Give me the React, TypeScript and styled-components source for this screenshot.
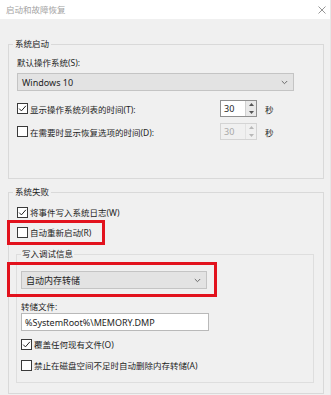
import React from 'react';
import styled, { createGlobalStyle } from 'styled-components';

const Global = createGlobalStyle`
  html, body { margin: 0; padding: 0; }
  body {
    background: #f0f0f0;
    font-family: "Noto Sans", "Noto Sans CJK SC", sans-serif;
    font-size: 8.5px;
    color: #1e1e1e;
  }
`;

const Window = styled.div`
  width: 331px;
  height: 395px;
  background: #f0f0f0;
  overflow: hidden;
  display: flex;
  flex-direction: column;
  box-sizing: border-box;
  border-right: 1px solid #e6e6e6;
`;

const TitleBar = styled.div`
  height: 19px;
  flex: none;
  background: #ffffff;
  display: flex;
  align-items: center;
  justify-content: space-between;
  padding: 0 4px 0 6px;
`;

const Title = styled.span`
  font-family: "Noto Sans CJK SC", sans-serif;
  font-size: 8.5px;
  color: #a3a3a3;
  line-height: 19px;
`;

const Content = styled.div`
  padding-left: 8px;
  display: flex;
  flex-direction: column;
`;

const Group = styled.fieldset<{ $top: number; $pb: number; $inner?: boolean }>`
  margin: ${p => p.$top}px 0 0 ${p => (p.$inner ? -1 : 0)}px;
  width: ${p => (p.$inner ? 298 : 316)}px;
  min-width: 0;
  box-sizing: border-box;
  border: 1px solid ${p => (p.$inner ? '#dedede' : '#d9d9d9')};
  padding: 0 8px ${p => p.$pb}px ${p => (p.$inner ? 4 : 8)}px;
  display: flex;
  flex-direction: column;
  align-items: flex-start;
`;

const Legend = styled.legend<{ $inner?: boolean }>`
  margin-left: ${p => (p.$inner ? 0 : -4)}px;
  padding: 0 ${p => (p.$inner ? 1 : 2)}px;
  line-height: 16px;
  font-size: 8.5px;
  color: #222;
`;

const Label = styled.div<{ $top: number; $lh?: number }>`
  margin-top: ${p => p.$top}px;
  line-height: ${p => p.$lh ?? 16}px;
`;

const Select = styled.div<{ $width: number; $top?: number }>`
  margin-top: ${p => p.$top ?? 0}px;
  width: ${p => p.$width}px;
  height: 18px;
  box-sizing: border-box;
  border: 1px solid #c4c4c4;
  background: #e3e3e3;
  display: flex;
  align-items: center;
  justify-content: space-between;
  padding: 0 5px 0 4px;
  font-size: 9px;
  color: #1e1e1e;
`;

const TextField = styled.div`
  width: 188px;
  height: 18px;
  box-sizing: border-box;
  border: 1px solid #b9b9b9;
  background: #ffffff;
  display: flex;
  align-items: center;
  padding-left: 3px;
  font-size: 9px;
`;

const SpinRow = styled.div<{ $top: number }>`
  margin-top: ${p => p.$top}px;
  width: 297px;
  display: grid;
  grid-template-columns: 1fr 37px 57px;
  align-items: center;
  height: 17px;
`;

const CheckRow = styled.label<{ $top?: number }>`
  margin-top: ${p => p.$top ?? 0}px;
  display: flex;
  align-items: center;
  gap: 2px;
  height: 16px;
  white-space: nowrap;
`;

const Box = styled.span`
  width: 11px;
  height: 11px;
  box-sizing: border-box;
  border: 1px solid #3a3a3a;
  background: #fff;
  display: inline-flex;
  align-items: center;
  justify-content: center;
  flex: none;
`;

const Spin = styled.div<{ $disabled?: boolean }>`
  width: 37px;
  height: 17px;
  box-sizing: border-box;
  border: 1px solid ${p => (p.$disabled ? '#d4d4d4' : '#8f8f8f')};
  background: ${p => (p.$disabled ? '#f0f0f0' : '#ffffff')};
  display: flex;
  align-items: stretch;
`;

const SpinValue = styled.span<{ $disabled?: boolean }>`
  flex: 1;
  display: flex;
  align-items: center;
  padding-left: 3px;
  font-size: 9px;
  color: ${p => (p.$disabled ? '#a8a8a8' : '#1e1e1e')};
`;

const SpinButtons = styled.div<{ $disabled?: boolean }>`
  width: 10px;
  display: flex;
  flex-direction: column;
  border-left: 1px solid ${p => (p.$disabled ? '#e2e2e2' : '#d0d0d0')};
  background: ${p => (p.$disabled ? '#f0f0f0' : '#e9e9e9')};
`;

const SpinBtn = styled.span`
  flex: 1;
  display: flex;
  align-items: center;
  justify-content: center;
`;

const Unit = styled.span`
  padding-left: 8px;
`;

const Highlight = styled.div<{ $top: number; $width: number; $shift: number; $pad: string }>`
  margin-top: ${p => p.$top}px;
  margin-left: -${p => p.$shift}px;
  padding: ${p => p.$pad};
  padding-left: ${p => p.$shift}px;
  width: ${p => p.$width}px;
  box-sizing: border-box;
  outline: 3px solid #e2121d;
  display: flex;
  flex-direction: column;
`;

const Check = () => (
  <svg width="9" height="9" viewBox="0 0 9 9">
    <path d="M1.2 4.6 L3.4 6.9 L7.9 1.8" fill="none" stroke="#222" strokeWidth="1" />
  </svg>
);

const Chevron = () => (
  <svg width="7" height="5" viewBox="0 0 7 5">
    <path d="M0.8 1 L3.5 3.7 L6.2 1" fill="none" stroke="#6b6b6b" strokeWidth="1" />
  </svg>
);

const Arrow = ({ up, color }: { up?: boolean; color: string }) => (
  <svg width="5" height="3" viewBox="0 0 5 3">
    <path d={up ? 'M0 3 L2.5 0 L5 3 Z' : 'M0 0 L2.5 3 L5 0 Z'} fill={color} />
  </svg>
);

const CheckItem = ({ checked, text, top }: { checked?: boolean; text: string; top?: number }) => (
  <CheckRow $top={top}>
    <Box>{checked && <Check />}</Box>
    <span>{text}</span>
  </CheckRow>
);

const Spinner = ({ disabled }: { disabled?: boolean }) => (
  <Spin $disabled={disabled}>
    <SpinValue $disabled={disabled}>30</SpinValue>
    <SpinButtons $disabled={disabled}>
      <SpinBtn><Arrow up color={disabled ? '#b8b8b8' : '#555'} /></SpinBtn>
      <SpinBtn><Arrow color={disabled ? '#b8b8b8' : '#555'} /></SpinBtn>
    </SpinButtons>
  </Spin>
);

const CloseIcon = () => (
  <svg width="8" height="8" viewBox="0 0 8 8">
    <path d="M0.5 0.5 L7.5 7.5 M7.5 0.5 L0.5 7.5" stroke="#8a8a8a" strokeWidth="0.9" />
  </svg>
);

export default function App() {
  return (
    <Window>
      <Global />
      <TitleBar>
        <Title>启动和故障恢复</Title>
        <CloseIcon />
      </TitleBar>
      <Content>
        <Group $top={17} $pb={38}>
          <Legend>系统启动</Legend>
          <Label $top={3}>默认操作系统(S):</Label>
          <Select $width={277} $top={2}>
            <span>Windows 10</span>
            <Chevron />
          </Select>
          <SpinRow $top={9}>
            <CheckItem checked text="显示操作系统列表的时间(T):" />
            <Spinner />
            <Unit>秒</Unit>
          </SpinRow>
          <SpinRow $top={6}>
            <CheckItem text="在需要时显示恢复选项的时间(D):" />
            <Spinner disabled />
            <Unit>秒</Unit>
          </SpinRow>
        </Group>

        <Group $top={5} $pb={10}>
          <Legend>系统失败</Legend>
          <CheckItem checked top={4} text="将事件写入系统日志(W)" />
          <Highlight $top={3} $width={92} $shift={7} $pad="1px 0 2px 0">
            <CheckItem text="自动重新启动(R)" />
          </Highlight>
          <Group $top={4} $pb={9} $inner>
            <Legend $inner>写入调试信息</Legend>
            <Highlight $top={3} $width={204} $shift={11} $pad="6px 0 5px 0">
              <Select $width={186}>
                <span>自动内存转储</span>
                <Chevron />
              </Select>
            </Highlight>
            <Label $top={6} $lh={13}>转储文件:</Label>
            <TextField>%SystemRoot%\MEMORY.DMP</TextField>
            <CheckItem checked top={5} text="覆盖任何现有文件(O)" />
            <CheckItem top={5} text="禁止在磁盘空间不足时自动删除内存转储(A)" />
          </Group>
        </Group>
      </Content>
    </Window>
  );
}
